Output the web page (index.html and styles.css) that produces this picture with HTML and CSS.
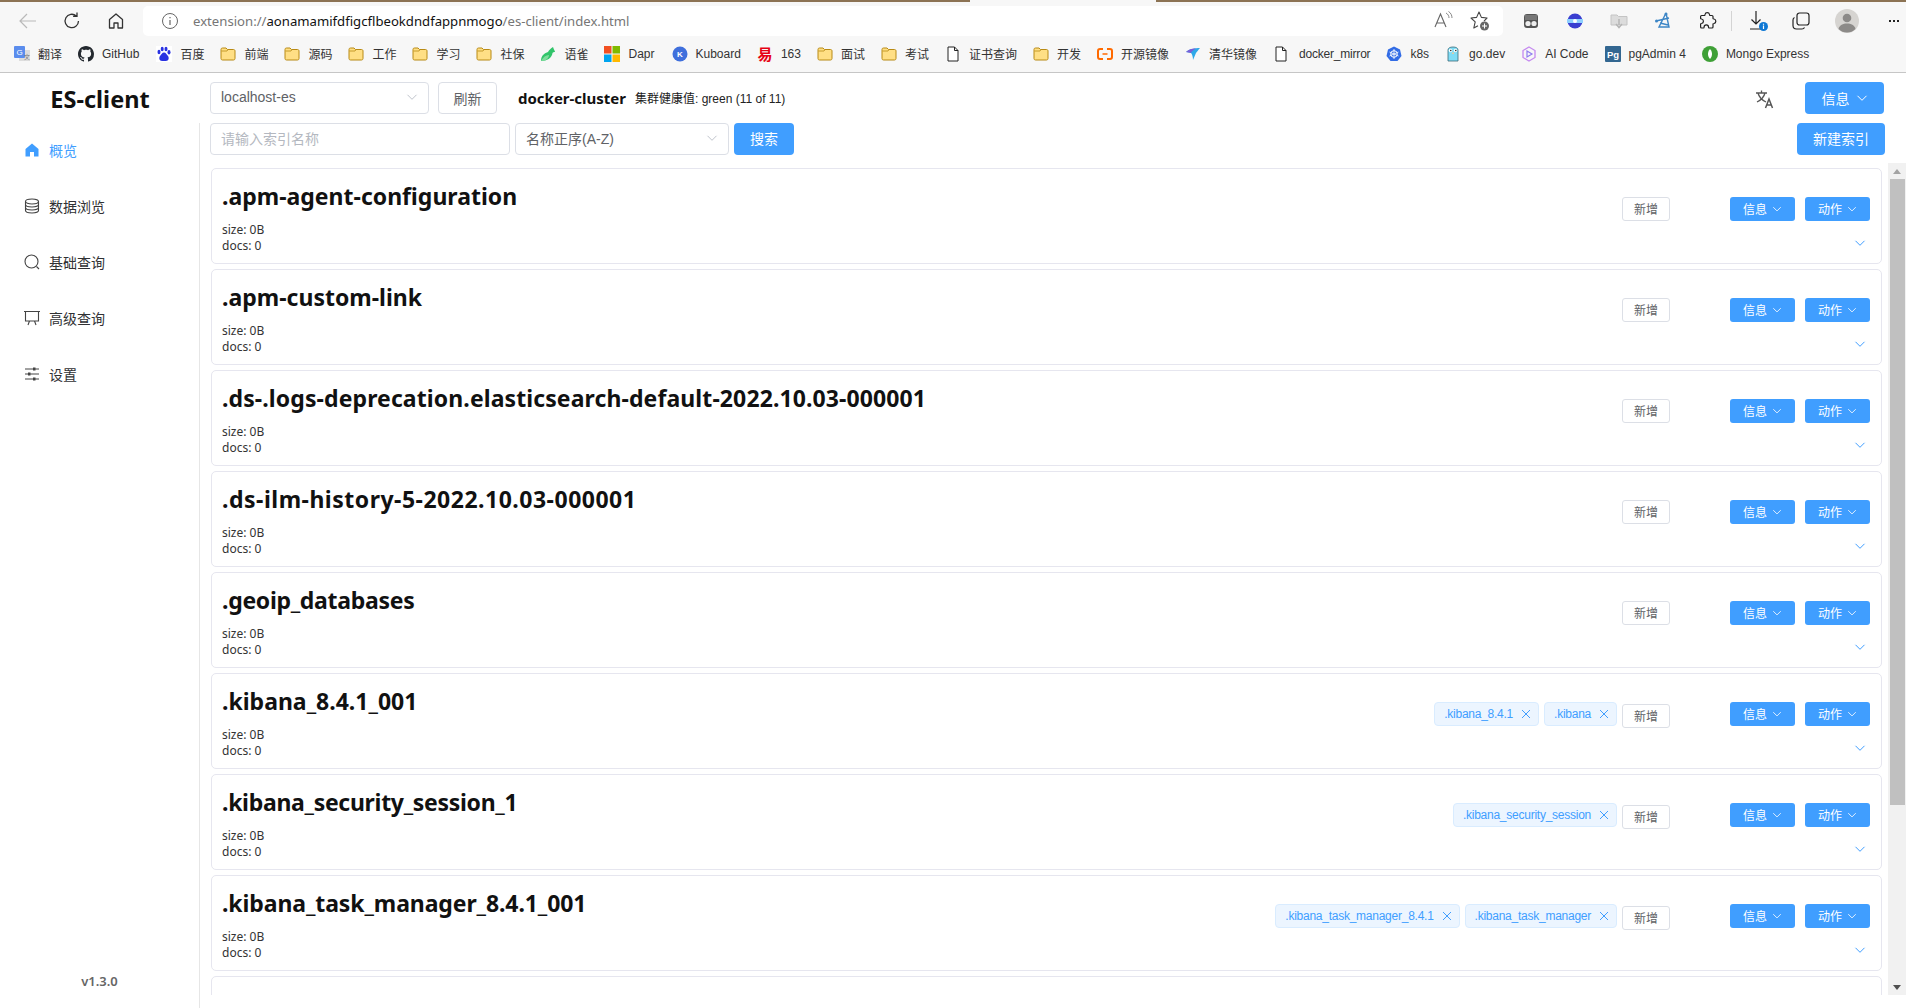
FILE: index.html
```html
<!DOCTYPE html>
<html lang="en">
<head>
    <meta charset="UTF-8">
    <title>ES-client</title>
    <link rel="stylesheet" href="styles.css">
</head>
<body>

<svg class="icon-defs">
    <symbol id="folder" viewBox="0 0 16 16"><path d="M1 3.500C1 2.600 1.600 2 2.500 2H6l1.500 1.500h6c.9 0 1.500.6 1.500 1.500v7.500c0 .9-.6 1.500-1.500 1.500h-11C1.600 14 1 13.400 1 12.500z" fill="#ffdf85" stroke="#b88a14"/><path d="M1.500 5h5.500l1-1.500" fill="none" stroke="#b88a14" stroke-width=".8"/></symbol>
    <symbol id="doc" viewBox="0 0 16 16"><path d="M3 1h6.500L13 4.500V15H3z" fill="#fff" stroke="#222" stroke-linejoin="round"/><path d="M9.500 1v3.500H13" fill="none" stroke="#222"/></symbol>
    <symbol id="chev" viewBox="0 0 12 12"><path d="M1.500 3.800 6 8.300l4.500-4.500" fill="none" stroke="currentColor" stroke-width="1"/></symbol>
    <symbol id="close" viewBox="0 0 12 12"><path d="M2 2l8 8M10 2l-8 8" fill="none" stroke="currentColor" stroke-width="1"/></symbol>
</svg>

<div class="browser">
    <div class="top-strip"><span class="strip-left"></span><span class="strip-right"></span></div>
    <div class="toolbar">
        <span class="tool"><svg width="20" height="20" viewBox="0 0 20 20"><path d="M18 10H2.500M9 3l-7 7 7 7" fill="none" stroke="#b9b9b9" stroke-width="1.200"/></svg></span>
        <span class="tool"><svg width="20" height="20" viewBox="0 0 20 20"><path d="M16.500 10a6.700 6.700 0 1 1-2.200-5M15 1.500V5.400h-3.900" fill="none" stroke="#333" stroke-width="1.300"/></svg></span>
        <span class="tool"><svg width="20" height="20" viewBox="0 0 20 20"><path d="M3.500 8.500 10 3l6.500 5.500V17h-4.500v-5H8v5H3.500z" fill="none" stroke="#333" stroke-width="1.300" stroke-linejoin="round"/></svg></span>
        <div class="address">
            <svg class="address-info" width="18" height="18" viewBox="0 0 18 18"><circle cx="9" cy="9" r="7.500" fill="none" stroke="#666"/><path d="M9 8v5M9 5v1.300" stroke="#666" stroke-width="1.200"/></svg>
            <span class="url"><span class="url-dim">extension://</span>aonamamifdfigcflbeokdndfappnmogo<span class="url-dim">/es-client/index.html</span></span>
            <span class="address-right">
                <span class="address-tool"><svg width="22" height="20" viewBox="0 0 22 20"><path d="M2 17 7.500 4 13 17M4 13h7" fill="none" stroke="#666" stroke-width="1.100"/><path d="M13 3c2 1 3 3 3 5M15.500 1.500c2.500 1.500 3.500 4 3.500 6.500" fill="none" stroke="#888"/></svg></span>
                <span class="address-tool"><svg width="22" height="22" viewBox="0 0 22 22"><path d="M15 11.200 18 8l-5.600-.6L10 2 7.600 7.400 2 8l4.200 3.800L4.800 18 9 15.800" fill="none" stroke="#444" stroke-width="1.100" stroke-linejoin="round"/><circle cx="15.500" cy="16" r="4.500" fill="#666"/><path d="M13 16h5M15.500 13.500v5" stroke="#fff"/></svg></span>
            </span>
        </div>
        <span class="tool tool-first"><svg width="16" height="16" viewBox="0 0 16 16"><rect x="1" y="1" width="14" height="14" rx="3" fill="#555"/><rect x="2" y="2" width="12" height="5" fill="#777"/><circle cx="5" cy="10.500" r="2.600" fill="#eee"/><circle cx="11" cy="10.500" r="2.600" fill="#eee"/></svg></span>
        <span class="tool"><svg width="18" height="18" viewBox="0 0 18 18"><circle cx="9" cy="9" r="7.500" fill="#3a3fd0"/><rect x="1" y="7" width="16" height="4" fill="#8fd0ff"/><circle cx="9" cy="9" r="2" fill="#fff"/></svg></span>
        <span class="tool"><svg width="18" height="18" viewBox="0 0 18 18"><path d="M1 3h6l1.500 1.500H17V13H1z" fill="#dcdcdc" stroke="#c4c4c4"/><path d="M9 7v6M6 12l3 3.500 3-3.500" fill="none" stroke="#b5b5b5" stroke-width="1.500"/></svg></span>
        <span class="tool"><svg width="18" height="18" viewBox="0 0 18 18"><path d="M12 1 5 15h10L12 1M2 9l13-3M6 11l8 2" fill="none" stroke="#3d86c6" stroke-width="1.400"/><circle cx="12" cy="2" r="1.500" fill="#3d86c6"/><circle cx="2.500" cy="9" r="1.500" fill="#3d86c6"/></svg></span>
        <span class="tool"><svg width="20" height="20" viewBox="0 0 20 20"><path d="M8 3.500a2.300 2.300 0 0 1 4.500 0c0 .5 0 1 .5 1h2c.6 0 1 .4 1 1v2c0 .5.500.5 1 .5a2.300 2.300 0 0 1 0 4.500c-.5 0-1 0-1 .5v3c0 .6-.4 1-1 1h-3c-.5 0-.5-.5-.5-1a2.200 2.200 0 0 0-4.400 0c0 .5 0 1-.5 1h-2c-.6 0-1-.4-1-1v-3c0-.5.500-.5 1-.5a2.300 2.300 0 0 0 0-4.500c-.5 0-1 0-1-.5v-2c0-.6.400-1 1-1h3c.3 0 .4-.5.400-1z" fill="none" stroke="#222" stroke-width="1.200"/></svg></span>
        <span class="tool-sep"></span>
        <span class="tool tool-download"><svg width="24" height="24" viewBox="0 0 24 24"><path d="M9 2v13M4.500 10.500 9 15l4.500-4.500M3 20h11" fill="none" stroke="#222" stroke-width="1.200"/><circle cx="16.500" cy="17.500" r="4.500" fill="#0f78d4"/><path d="M16.500 16.500v3.500M16.500 14.800v1" stroke="#fff" stroke-width="1.200"/></svg></span>
        <span class="tool tool-collect"><svg width="20" height="20" viewBox="0 0 20 20"><rect x="6" y="2" width="12" height="12" rx="2.500" fill="none" stroke="#222" stroke-width="1.200"/><path d="M3.500 6.500C2.500 7 2 8 2 9v5.500C2 16.500 3.500 18 5.500 18H11c1 0 2-.5 2.500-1.500" fill="none" stroke="#222" stroke-width="1.200"/></svg></span>
        <span class="avatar"><svg width="24" height="24" viewBox="0 0 24 24"><circle cx="12" cy="12" r="12" fill="#d6d4d1"/><circle cx="12" cy="9" r="4.300" fill="#8c8a88"/><path d="M3.500 20c1-4 4.500-5.500 8.500-5.500s7.500 1.500 8.500 5.500a12 12 0 0 1-17 0z" fill="#8c8a88"/></svg></span>
        <span class="more-dots"><i></i><i></i><i></i></span>
    </div>
    <div class="bookmarks">
        <a class="bookmark"><svg width="16" height="16" viewBox="0 0 16 16"><rect x="5" y="4" width="11" height="11" fill="#ddd"/><rect x="0" y="0" width="11" height="12" rx="1" fill="#5b8ded"/><text class="fav-text" x="5.500" y="9" text-anchor="middle" fill="#fff" font-size="8">G</text><text class="fav-text" x="13" y="13" text-anchor="middle" fill="#777" font-size="6">文</text></svg>翻译</a>
        <a class="bookmark bookmark-en"><svg width="16" height="16" viewBox="0 0 16 16"><path d="M8 0C3.580 0 0 3.580 0 8c0 3.540 2.290 6.530 5.470 7.590.4.070.55-.17.55-.38 0-.19-.01-.82-.01-1.490-2.010.37-2.530-.49-2.690-.94-.09-.23-.48-.94-.82-1.130-.28-.15-.68-.52-.01-.53.63-.01 1.080.58 1.230.82.72 1.210 1.870.87 2.330.66.070-.52.28-.87.51-1.070-1.780-.2-3.640-.89-3.640-3.950 0-.87.310-1.590.82-2.150-.08-.2-.36-1.020.08-2.120 0 0 .67-.21 2.200.82.640-.18 1.320-.27 2-.27s1.360.09 2 .27c1.530-1.040 2.200-.82 2.200-.82.440 1.100.160 1.920.08 2.120.51.56.82 1.270.82 2.150 0 3.070-1.870 3.750-3.650 3.950.29.25.54.73.54 1.480 0 1.070-.01 1.930-.01 2.200 0 .21.150.46.55.38A8.010 8.010 0 0 0 16 8c0-4.420-3.580-8-8-8z" fill="#24292f"/></svg>GitHub</a>
        <a class="bookmark"><svg width="16" height="16" viewBox="0 0 16 16"><rect width="16" height="16" fill="#fff"/><ellipse cx="3" cy="6" rx="1.500" ry="2.200" fill="#2932e1"/><ellipse cx="6.200" cy="3" rx="1.500" ry="2.300" fill="#2932e1"/><ellipse cx="10" cy="3" rx="1.500" ry="2.300" fill="#2932e1"/><ellipse cx="13" cy="6.200" rx="1.500" ry="2.200" fill="#2932e1"/><path d="M8 6.500c2 0 2.500 2 4 3.500 1.500 2 .5 5-2 5H6c-2.500 0-3.500-3-2-5 1.500-1.500 2-3.500 4-3.500z" fill="#2932e1"/></svg>百度</a>
        <a class="bookmark"><svg width="16" height="16"><use href="#folder"/></svg>前端</a>
        <a class="bookmark"><svg width="16" height="16"><use href="#folder"/></svg>源码</a>
        <a class="bookmark"><svg width="16" height="16"><use href="#folder"/></svg>工作</a>
        <a class="bookmark"><svg width="16" height="16"><use href="#folder"/></svg>学习</a>
        <a class="bookmark"><svg width="16" height="16"><use href="#folder"/></svg>社保</a>
        <a class="bookmark"><svg width="16" height="16" viewBox="0 0 16 16"><path d="M1 15c0-6 4-8 7-9 1-2 3-4 5-5 1 3 2 4 2 5-1 0-2 0-2.500 1C12 12 7 15 1 15z" fill="#31c46a"/><path d="M1 15c2-4 5-6 8-6 0 3-3 6-8 6z" fill="#7edc9c"/></svg>语雀</a>
        <a class="bookmark bookmark-en"><svg width="16" height="16" viewBox="0 0 16 16"><rect width="7.500" height="7.500" fill="#f25022"/><rect x="8.500" width="7.500" height="7.500" fill="#7fba00"/><rect y="8.500" width="7.500" height="7.500" fill="#00a4ef"/><rect x="8.500" y="8.500" width="7.500" height="7.500" fill="#ffb900"/></svg>Dapr</a>
        <a class="bookmark"><svg width="16" height="16" viewBox="0 0 16 16"><circle cx="8" cy="8" r="7.500" fill="#3f6fdc"/><text class="fav-text" x="8" y="11" text-anchor="middle" fill="#fff" font-size="8" font-weight="700">K</text></svg>Kuboard</a>
        <a class="bookmark"><svg width="16" height="16" viewBox="0 0 16 16"><text class="fav-text" x="8" y="13.500" text-anchor="middle" fill="#e60012" font-size="15" font-weight="700">易</text></svg>163</a>
        <a class="bookmark"><svg width="16" height="16"><use href="#folder"/></svg>面试</a>
        <a class="bookmark"><svg width="16" height="16"><use href="#folder"/></svg>考试</a>
        <a class="bookmark"><svg width="16" height="16"><use href="#doc"/></svg>证书查询</a>
        <a class="bookmark"><svg width="16" height="16"><use href="#folder"/></svg>开发</a>
        <a class="bookmark"><svg width="16" height="16" viewBox="0 0 16 16"><path d="M6 3H3C1.800 3 1 3.800 1 5v6c0 1.200.800 2 2 2h3M10 3h3c1.200 0 2 .8 2 2v6c0 1.200-.8 2-2 2h-3" fill="none" stroke="#ff6a00" stroke-width="2"/><path d="M5.500 8h5" stroke="#ff6a00" stroke-width="1.500"/></svg>开源镜像</a>
        <a class="bookmark"><svg width="16" height="16" viewBox="0 0 16 16"><path d="M1 6c3-3 9-4 14-4-2 2-3 4-4 5-1 2-2 5-3 7 0-3-1-6-2-7-1 0-3-1-5-1z" fill="#2fa8e8"/><path d="M1 6c3-3 7-4 10-3.500C8 4 6 6 6 7 4 7 3 6 1 6z" fill="#7a5fd8"/></svg>清华镜像</a>
        <a class="bookmark bookmark-doc"><svg width="16" height="16"><use href="#doc"/></svg>docker_mirror</a>
        <a class="bookmark"><svg width="16" height="16" viewBox="0 0 16 16"><path d="M8 .5l6 3 1.500 6.500-4 5h-7l-4-5L2 3.500z" fill="#326ce5"/><circle cx="8" cy="8" r="3.300" fill="none" stroke="#fff"/><path d="M8 3v10M3.500 6l9 4M12.500 6l-9 4" stroke="#fff" stroke-width=".8"/></svg>k8s</a>
        <a class="bookmark"><svg width="16" height="16" viewBox="0 0 16 16"><path d="M3 4c0-2 2-3 5-3s5 1 5 3v11H3z" fill="#7fdcf5" stroke="#3a6b7a" stroke-width=".8"/><circle cx="5.500" cy="4.500" r="1.700" fill="#fff"/><circle cx="10.500" cy="4.500" r="1.700" fill="#fff"/><circle cx="5.800" cy="4.500" r=".7" fill="#111"/><circle cx="10.800" cy="4.500" r=".7" fill="#111"/><rect x="7" y="6.500" width="2" height="1.500" fill="#e8c9a0"/></svg>go.dev</a>
        <a class="bookmark"><svg width="16" height="16" viewBox="0 0 16 16"><path d="M8 1l6 3.500v7L8 15l-6-3.500v-7z" fill="none" stroke="#c58af0" stroke-width="1.300"/><path d="M6 5l5 3-5 3z" fill="none" stroke="#8f7cf0" stroke-width="1.200"/></svg>AI Code</a>
        <a class="bookmark"><svg width="16" height="16" viewBox="0 0 16 16"><rect width="16" height="16" rx="1" fill="#336791"/><text class="fav-text" x="8" y="11.500" text-anchor="middle" fill="#fff" font-size="9.500" font-weight="700">Pg</text></svg>pgAdmin 4</a>
        <a class="bookmark"><svg width="16" height="16" viewBox="0 0 16 16"><circle cx="8" cy="8" r="8" fill="#3fa037"/><path d="M8 3c1.500 1.500 2 3.500 2 5s-.5 3.500-2 5c-1.500-1.500-2-3.500-2-5s.5-3.500 2-5z" fill="#fff"/></svg>Mongo Express</a>
    </div>
</div>

<div class="app">
    <header class="app-header">
        <div class="logo">ES-client</div>
        <div class="select select-host">localhost-es<svg class="select-arrow" width="12" height="12"><use href="#chev"/></svg></div>
        <button class="btn-plain btn-refresh">刷新</button>
        <span class="cluster-name">docker-cluster</span>
        <span class="cluster-health">集群健康值: green (11 of 11)</span>
        <svg class="lang-icon" width="20" height="20" viewBox="0 0 20 20"><path d="M1 4h11M6.500 1.500V4M3 4c1 4 4 7 8 9M10 4c-1 4-4 7-8 9" fill="none" stroke="#555" stroke-width="1.300"/><path d="M10.500 19l3.500-9 3.500 9M11.800 16h4.400" fill="none" stroke="#555" stroke-width="1.500"/></svg>
        <button class="btn-primary btn-info-top">信息<svg width="12" height="12"><use href="#chev"/></svg></button>
    </header>

    <div class="app-body">
        <aside class="sidebar">
            <nav class="menu">
                <a class="menu-item active"><svg width="16" height="16" viewBox="0 0 16 16"><path d="M8 1.500 14.500 7v7.500H10V10H6v4.500H1.500V7z" fill="#409eff"/></svg>概览</a>
                <a class="menu-item"><svg width="16" height="16" viewBox="0 0 16 16"><g fill="none" stroke="#444" stroke-width="1.100"><ellipse cx="8" cy="3.500" rx="6.500" ry="2.500"/><path d="M1.500 3.500v9c0 1.400 3 2.500 6.500 2.500s6.500-1.100 6.500-2.500v-9M1.500 6.500C1.500 8 4.500 9 8 9s6.500-1 6.500-2.500M1.500 9.500C1.500 11 4.500 12 8 12s6.500-1 6.500-2.500"/></g></svg>数据浏览</a>
                <a class="menu-item"><svg width="16" height="16" viewBox="0 0 16 16"><circle cx="7.500" cy="7.500" r="6.500" fill="none" stroke="#444" stroke-width="1.100"/><path d="M12.500 12.500 15 15" stroke="#444" stroke-width="1.100"/></svg>基础查询</a>
                <a class="menu-item"><svg width="16" height="16" viewBox="0 0 16 16"><path d="M0 1.500h16M1.500 1.500v9.500h13V1.500M5.500 11l-1.500 4M10.500 11l1.500 4" fill="none" stroke="#444" stroke-width="1.100"/></svg>高级查询</a>
                <a class="menu-item"><svg width="16" height="16" viewBox="0 0 16 16"><path d="M1 3h14M1 8h14M1 13h14" stroke="#444"/><rect x="9" y="1.500" width="2.500" height="3" fill="#444"/><rect x="4" y="6.500" width="2.500" height="3" fill="#444"/><rect x="9" y="11.500" width="2.500" height="3" fill="#444"/></svg>设置</a>
            </nav>
            <div class="version">v1.3.0</div>
        </aside>

        <main class="main">
            <div class="search-row">
                <input class="search-input" type="text" placeholder="请输入索引名称">
                <div class="select select-sort">名称正序(A-Z)<svg class="select-arrow" width="12" height="12"><use href="#chev"/></svg></div>
                <button class="btn-primary btn-search">搜索</button>
                <button class="btn-primary btn-new">新建索引</button>
            </div>

            <div class="list-wrap">
                <div class="list">
                    <div class="card">
                        <div class="card-left"><h2>.apm-agent-configuration</h2><p>size: 0B</p><p>docs: 0</p></div>
                        <div class="card-right">
                            <div class="card-actions"><button class="btn-add">新增</button><button class="btn-small">信息<svg width="10" height="10"><use href="#chev"/></svg></button><button class="btn-small">动作<svg width="10" height="10"><use href="#chev"/></svg></button></div>
                            <svg class="expand" width="12" height="12"><use href="#chev"/></svg>
                        </div>
                    </div>
                    <div class="card">
                        <div class="card-left"><h2>.apm-custom-link</h2><p>size: 0B</p><p>docs: 0</p></div>
                        <div class="card-right">
                            <div class="card-actions"><button class="btn-add">新增</button><button class="btn-small">信息<svg width="10" height="10"><use href="#chev"/></svg></button><button class="btn-small">动作<svg width="10" height="10"><use href="#chev"/></svg></button></div>
                            <svg class="expand" width="12" height="12"><use href="#chev"/></svg>
                        </div>
                    </div>
                    <div class="card">
                        <div class="card-left"><h2 class="track-slight">.ds-.logs-deprecation.elasticsearch-default-2022.10.03-000001</h2><p>size: 0B</p><p>docs: 0</p></div>
                        <div class="card-right">
                            <div class="card-actions"><button class="btn-add">新增</button><button class="btn-small">信息<svg width="10" height="10"><use href="#chev"/></svg></button><button class="btn-small">动作<svg width="10" height="10"><use href="#chev"/></svg></button></div>
                            <svg class="expand" width="12" height="12"><use href="#chev"/></svg>
                        </div>
                    </div>
                    <div class="card">
                        <div class="card-left"><h2 class="track-wide">.ds-ilm-history-5-2022.10.03-000001</h2><p>size: 0B</p><p>docs: 0</p></div>
                        <div class="card-right">
                            <div class="card-actions"><button class="btn-add">新增</button><button class="btn-small">信息<svg width="10" height="10"><use href="#chev"/></svg></button><button class="btn-small">动作<svg width="10" height="10"><use href="#chev"/></svg></button></div>
                            <svg class="expand" width="12" height="12"><use href="#chev"/></svg>
                        </div>
                    </div>
                    <div class="card">
                        <div class="card-left"><h2 class="track-tight">.geoip_databases</h2><p>size: 0B</p><p>docs: 0</p></div>
                        <div class="card-right">
                            <div class="card-actions"><button class="btn-add">新增</button><button class="btn-small">信息<svg width="10" height="10"><use href="#chev"/></svg></button><button class="btn-small">动作<svg width="10" height="10"><use href="#chev"/></svg></button></div>
                            <svg class="expand" width="12" height="12"><use href="#chev"/></svg>
                        </div>
                    </div>
                    <div class="card">
                        <div class="card-left"><h2>.kibana_8.4.1_001</h2><p>size: 0B</p><p>docs: 0</p></div>
                        <div class="card-right">
                            <div class="card-actions"><span class="tag">.kibana_8.4.1<svg width="12" height="12"><use href="#close"/></svg></span><span class="tag">.kibana<svg width="12" height="12"><use href="#close"/></svg></span><button class="btn-add">新增</button><button class="btn-small">信息<svg width="10" height="10"><use href="#chev"/></svg></button><button class="btn-small">动作<svg width="10" height="10"><use href="#chev"/></svg></button></div>
                            <svg class="expand" width="12" height="12"><use href="#chev"/></svg>
                        </div>
                    </div>
                    <div class="card">
                        <div class="card-left"><h2 class="track-tight">.kibana_security_session_1</h2><p>size: 0B</p><p>docs: 0</p></div>
                        <div class="card-right">
                            <div class="card-actions"><span class="tag">.kibana_security_session<svg width="12" height="12"><use href="#close"/></svg></span><button class="btn-add">新增</button><button class="btn-small">信息<svg width="10" height="10"><use href="#chev"/></svg></button><button class="btn-small">动作<svg width="10" height="10"><use href="#chev"/></svg></button></div>
                            <svg class="expand" width="12" height="12"><use href="#chev"/></svg>
                        </div>
                    </div>
                    <div class="card">
                        <div class="card-left"><h2 class="track-slight-tight">.kibana_task_manager_8.4.1_001</h2><p>size: 0B</p><p>docs: 0</p></div>
                        <div class="card-right">
                            <div class="card-actions"><span class="tag">.kibana_task_manager_8.4.1<svg width="12" height="12"><use href="#close"/></svg></span><span class="tag">.kibana_task_manager<svg width="12" height="12"><use href="#close"/></svg></span><button class="btn-add">新增</button><button class="btn-small">信息<svg width="10" height="10"><use href="#chev"/></svg></button><button class="btn-small">动作<svg width="10" height="10"><use href="#chev"/></svg></button></div>
                            <svg class="expand" width="12" height="12"><use href="#chev"/></svg>
                        </div>
                    </div>
                    <div class="card"></div>
                </div>
                <div class="scrollbar">
                    <span class="scroll-arrow-up"></span>
                    <span class="scroll-thumb"></span>
                    <span class="scroll-arrow-down"></span>
                </div>
            </div>
        </main>
    </div>
</div>

</body>
</html>
```

FILE: styles.css
```css
* {
    box-sizing: border-box;
}
body {
    margin: 0;
    height: 1008px;
    overflow: hidden;
    background-color: #fff;
    color: #303133;
    font-family: "Noto Sans", "Noto Sans CJK SC", sans-serif;
    font-size: 14px;
}
button, input {
    font-family: inherit;
}
.icon-defs {
    display: none;
}

/* browser chrome */
.browser {
    height: 73px;
    background-color: #f7f7f7;
    border-bottom: 1px solid #c6c6c6;
}
.top-strip {
    display: flex;
    justify-content: space-between;
    height: 2px;
}
.strip-left {
    width: 970px;
    background-color: #8c7354;
}
.strip-right {
    width: 750px;
    background-color: #8c7354;
}
.toolbar {
    display: flex;
    align-items: center;
    height: 34px;
    margin-top: 2px;
    padding-left: 6px;
}
.tool {
    display: flex;
    justify-content: center;
    align-items: center;
    flex: none;
    width: 44px;
}
.tool-first {
    margin-left: 6px;
}
.tool-sep {
    flex: none;
    width: 1px;
    height: 20px;
    margin: 0 2px;
    background-color: #d4d4d4;
}
.tool-download {
    margin-left: 3px;
}
.tool-collect {
    width: 40px;
}
.avatar {
    display: flex;
    justify-content: center;
    flex: none;
    width: 44px;
    margin-left: 4px;
}
.more-dots {
    display: flex;
    justify-content: center;
    gap: 2px;
    flex: none;
    width: 28px;
    margin-left: 11px;
}
.more-dots i {
    width: 2px;
    height: 2px;
    background-color: #222;
}
.address {
    display: flex;
    align-items: center;
    flex: none;
    width: 1360px;
    height: 30px;
    margin-left: 5px;
    padding: 0 5px 0 18px;
    background-color: #fff;
    border-radius: 5px;
}
.address-info {
    margin-right: 14px;
}
.url {
    font-size: 13.15px;
    color: #111;
}
.url-dim {
    color: #767676;
}
.address-right {
    display: flex;
    margin-left: auto;
}
.address-tool {
    display: flex;
    justify-content: center;
    width: 36px;
}
.bookmarks {
    display: flex;
    align-items: center;
    gap: 16px;
    height: 31px;
    padding-left: 14px;
    font-family: "Liberation Sans", "Noto Sans CJK SC", sans-serif;
}
.bookmark {
    display: flex;
    align-items: center;
    gap: 8px;
    color: #333;
    font-size: 12px;
    white-space: nowrap;
}
.bookmark-en {
    padding-right: 1px;
}
.bookmark-doc {
    gap: 10px;
    letter-spacing: -.2px;
}
.fav-text {
    font-family: "Liberation Sans", "Noto Sans CJK SC", sans-serif;
}

/* app header */
.app-header {
    display: flex;
    align-items: flex-start;
    height: 50px;
    padding-top: 9px;
}
.logo {
    flex: none;
    width: 210px;
    padding: 1px 10px 0 0;
    font-size: 23.5px;
    font-weight: 700;
    line-height: 32px;
    color: #111;
    text-align: center;
}
.select {
    display: flex;
    align-items: center;
    justify-content: space-between;
    height: 32px;
    padding: 0 10px 2px;
    background-color: #fff;
    border: 1px solid #dcdfe6;
    border-radius: 4px;
    font-family: "Liberation Sans", "Noto Sans CJK SC", sans-serif;
    font-size: 14px;
    color: #606266;
}
.select-host {
    width: 219px;
    margin-right: 9px;
}
.select-sort {
    width: 214px;
    margin-right: 5px;
}
.select-arrow {
    color: #c0c4cc;
}
.btn-plain {
    height: 32px;
    background-color: #fff;
    border: 1px solid #dcdfe6;
    border-radius: 4px;
    font-size: 14px;
    color: #606266;
}
.btn-refresh {
    width: 59px;
    margin-right: 21px;
}
.cluster-name {
    margin-right: 9px;
    font-size: 15px;
    font-weight: 700;
    line-height: 32px;
    color: #111;
}
.cluster-health {
    padding-top: 1px;
    font-family: "Liberation Sans", "Noto Sans CJK SC", sans-serif;
    font-size: 12px;
    line-height: 32px;
    color: #222;
}
.lang-icon {
    margin: 7px 30px 0 auto;
}
.btn-primary {
    display: flex;
    align-items: center;
    justify-content: center;
    height: 32px;
    padding: 0;
    background-color: #409eff;
    border: 0;
    border-radius: 4px;
    font-size: 14px;
    color: #fff;
}
.btn-info-top {
    gap: 6px;
    width: 79px;
    margin-right: 22px;
}
.btn-search {
    width: 60px;
    padding-bottom: 2px;
}
.btn-new {
    width: 88px;
    margin: 0 21px 0 auto;
    padding-bottom: 2px;
}

/* sidebar + main */
.app-body {
    display: flex;
    height: 885px;
}
.sidebar {
    display: flex;
    flex-direction: column;
    flex: none;
    width: 200px;
    border-right: 1px solid #e6e6e6;
}
.menu-item {
    display: flex;
    align-items: center;
    gap: 9px;
    height: 56px;
    padding: 0 0 2px 24px;
    font-size: 14px;
    color: #303133;
}
.menu-item.active {
    color: #409eff;
}
.version {
    margin-top: auto;
    padding-bottom: 18px;
    font-size: 13px;
    font-weight: 600;
    color: #666;
    text-align: center;
}
.main {
    display: flex;
    flex-direction: column;
    flex: 1;
    min-width: 0;
}
.search-row {
    display: flex;
    flex: none;
    height: 40px;
    padding-left: 10px;
}
.search-input {
    width: 300px;
    height: 32px;
    margin-right: 5px;
    padding: 0 10px 2px;
    border: 1px solid #dcdfe6;
    border-radius: 4px;
    font-size: 14px;
}
.search-input::placeholder {
    color: #b4b8c0;
}
.list-wrap {
    display: flex;
    height: 832px;
}
.list {
    flex: 1;
    min-width: 0;
    overflow: hidden;
    padding: 5px 6px 0 11px;
}
.card {
    display: flex;
    justify-content: space-between;
    height: 96px;
    margin-bottom: 5px;
    padding: 10px 11px 10px 10px;
    border: 1px solid #e6e6ef;
    border-radius: 5px;
}
.card-left h2 {
    margin: 0 0 9px;
    font-size: 23px;
    font-weight: 700;
    line-height: 34px;
    color: #111;
}
.card-left h2.track-slight {
    letter-spacing: .1px;
}
.card-left h2.track-wide {
    letter-spacing: .5px;
}
.card-left h2.track-tight {
    letter-spacing: -.3px;
}
.card-left h2.track-slight-tight {
    letter-spacing: -.1px;
}
.card-left p {
    margin: 0;
    font-size: 12px;
    line-height: 16px;
    color: #333;
}
.card-right {
    display: flex;
    flex-direction: column;
    align-items: flex-end;
    padding-top: 18px;
}
.card-actions {
    display: flex;
    align-items: flex-start;
    height: 26px;
}
.tag {
    display: flex;
    align-items: center;
    gap: 7px;
    height: 24px;
    margin-right: 5px;
    padding: 0 6px 0 9px;
    background-color: #ecf5ff;
    border: 1px solid #d9ecff;
    border-radius: 4px;
    font-family: "Liberation Sans", sans-serif;
    font-size: 12px;
    letter-spacing: -.25px;
    color: #409eff;
}
.btn-add {
    width: 48px;
    height: 24px;
    margin-right: 60px;
    padding: 0;
    background-color: #fff;
    border: 1px solid #dcdfe6;
    border-radius: 3px;
    font-size: 12px;
    color: #606266;
}
.tag + .btn-add {
    margin-top: 2px;
}
.btn-small {
    display: flex;
    align-items: center;
    justify-content: center;
    gap: 5px;
    width: 65px;
    height: 24px;
    margin-left: 10px;
    padding: 0;
    background-color: #409eff;
    border: 0;
    border-radius: 3px;
    font-size: 12px;
    color: #fff;
}
.btn-add + .btn-small {
    margin-left: 0;
}
.expand {
    margin: 14px 4px 0 0;
    color: #409eff;
}
.scrollbar {
    display: flex;
    flex-direction: column;
    align-items: center;
    flex: none;
    width: 18px;
    height: 832px;
    background-color: #f1f1f1;
}
.scroll-arrow-up, .scroll-arrow-down {
    width: 0;
    height: 0;
    margin: 6px 0 5px;
    border-left: 4px solid transparent;
    border-right: 4px solid transparent;
}
.scroll-arrow-up {
    border-bottom: 5px solid #a3a3a3;
}
.scroll-arrow-down {
    margin-top: auto;
    border-top: 5px solid #505050;
}
.scroll-thumb {
    width: 15px;
    height: 626px;
    background-color: #c0c0c0;
}
```
